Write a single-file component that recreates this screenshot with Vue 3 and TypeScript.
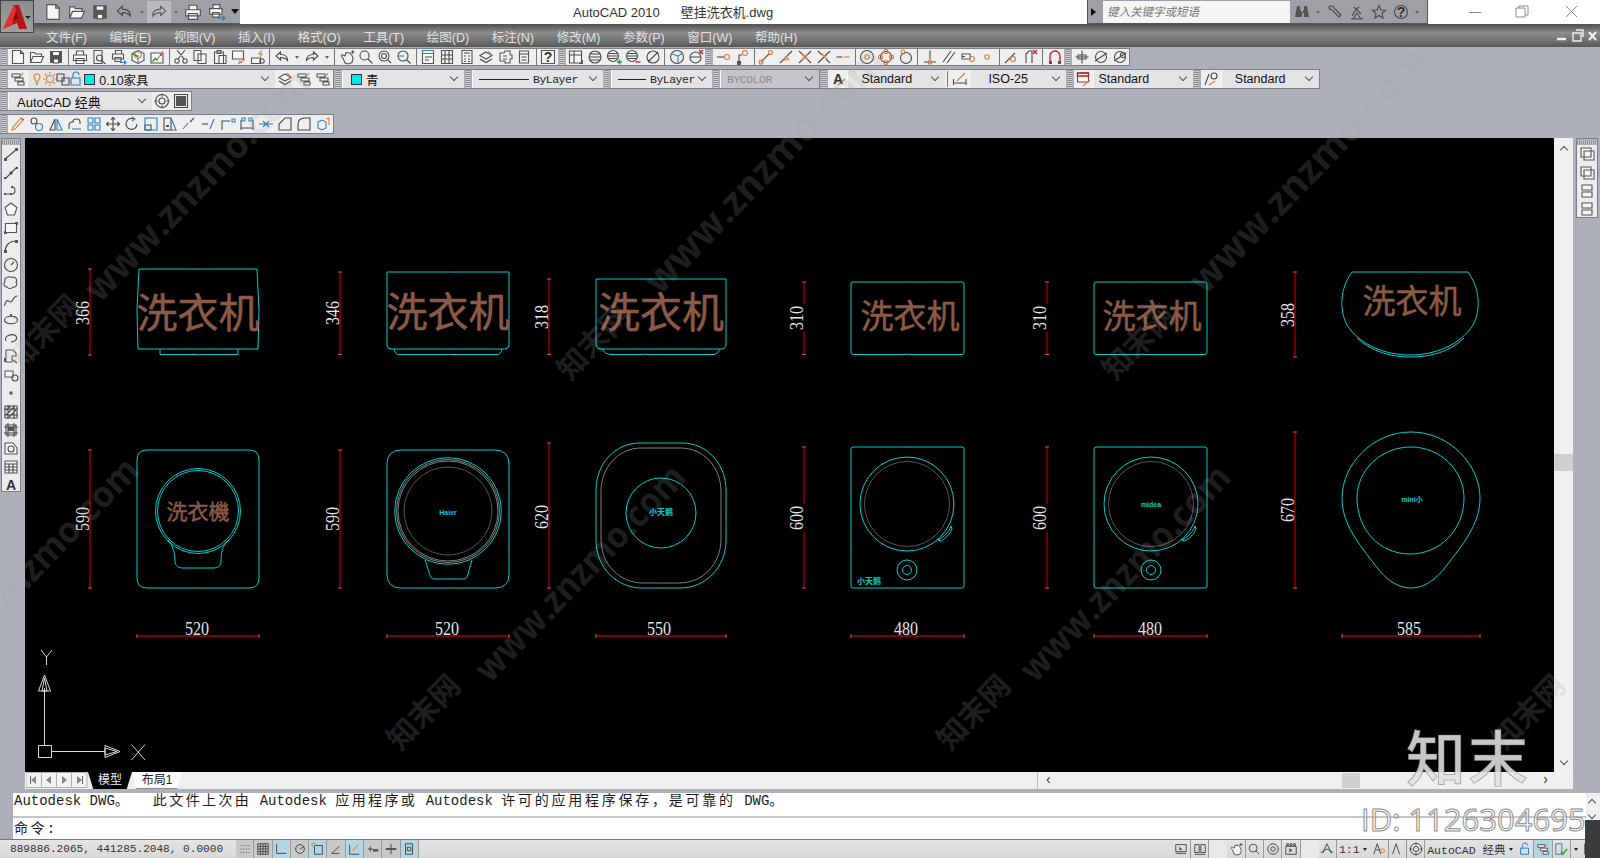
<script setup lang="ts">
import { h } from 'vue'

type Parts = { w?: string; s?: string; k?: string; b?: string; o?: string; r?: string; g?: string; t?: string }

// small toolbar glyphs, 16x16
const circle = (x: number, y: number, r: number) => `M${x - r} ${y}a${r} ${r} 0 1 0 ${2 * r} 0a${r} ${r} 0 1 0 ${-2 * r} 0z`

const icons: Record<string, Parts> = {
  new: { w: 'M2.5 1.5h8l3 3v10h-11z', k: 'M10.5 1.5v3h3' },
  open: { w: 'M1.5 13.5v-10h4l1 1.5h6v2M1.5 13.5l2.5-6h10.5l-2.5 6z' },
  save: { s: 'M2 2h12v12H2z', w: 'M4.5 2.5h7v4h-7zM5.5 10h5v4h-5z' },
  print: { w: 'M4.5 6V2h7v4M1.5 6h13v5.5h-13zM4 9.5h8v5H4z' },
  preview: { w: 'M3 1.5h8v13H3z', k: circle(8.5, 9, 3) + 'M10.5 11.5l4 3.5' },
  plot: { w: 'M4.5 5V1.5h6V5M1.5 5h11v5h-11zM4 8.5h6v4H4z', b: 'M9 13.5h6M13 11.5l2 2-2 2' },
  pub: { w: 'M8 1.5l6 3v7l-6 3-6-3v-7z', o: circle(8, 6, 3.4), b: 'M8 6v8.5', g: 'M2 4.5l6 3' },
  mark: { w: 'M2 4h12v10H2z', g: 'M3.5 12.5l3-3 2 2', o: 'M8 11l6-9', r: 'M11 6h2' },
  cut: { k: 'M4 1l7 9M12 1L5 10' + circle(4, 12, 2.2) + circle(12, 12, 2.2) },
  copy: { w: 'M2 1.5h7v10H2zM6 5h8v9.5H6z' },
  paste: { w: 'M2.5 3h9v11.500h-9zM5 1.500h4v3H5zM7 6.500h7v8H7z' },
  match: { w: 'M1.500 2h11v8h-11z', s: 'M1.500 2h11v2.500h-11z', o: 'M7 15l7-5M8 12l3 2' },
  block: { w: 'M1.500 9h9v5.500h-9z', k: circle(12, 12, 2.200), o: 'M12 1L9 5h3l-2 3' },
  undo: { k: 'M6.500 3L2 7l4.500 4V8.500c3 0 5 .5 7 3 0-4-3-6-7-6z' },
  redo: { k: 'M9.500 3L14 7l-4.500 4V8.500c-3 0-5 .5-7 3 0-4 3-6 7-6z' },
  pan: { w: 'M4 9C2 7.500 2 5.500 4 6l2 1 1-3.500 4 .5 2 2.500 1 3-1 4-4 1.500-3-1z', k: 'M12 3h3.500M13.700 1.200v3.500' },
  zoom: { k: circle(6.500, 6.500, 4.500) + 'M10 10l4.500 4.500M10.500 10.500l4 4' },
  zwin: { k: circle(7, 7, 5) + circle(7, 7, 2.500) + 'M11 11l3 3' },
  zprev: { k: circle(7, 7, 5) + 'M11 11l3.500 3.500', b: 'M3 7h5' },
  prop: { w: 'M2.500 1.500h11v13h-11z', b: 'M2.500 1.500h11v3h-11z', k: 'M5 8h7M5 11h4' },
  grid: { w: 'M2.500 1.500h11v13h-11z', k: 'M6 1.500v13M10 1.500v13M2.500 6h11M2.500 10h11' },
  calc: { w: 'M3 1.500h10v13H3z', k: 'M5 4h6M5 7h2M9 7h2M5 10h2M9 10h2M5 12.500h2M9 12.500h2' },
  layer: { w: 'M8 3l6 3.500-6 3.500-6-3.500z', k: 'M2 10l6 3.500 6-3.500', o: 'M10 2l4 4' },
  cloud: { w: 'M3 4h4l1-2h5v4h2v4h-2v4H8v-2H3z', k: 'M6 7h4M6 10h4' },
  doc: { w: 'M3.500 2h9v12h-9z', k: 'M3.500 5h9M5.500 8h5M5.500 11h5' },
  help: { w: 'M1.500 1.500h13v13h-13z', t: '?' },
  vport: { w: 'M1.500 2h12v12h-12z', k: 'M1.500 6h12M6 2v12', s: 'M11 11h4v4h-4z' },
  orb: { k: circle(8, 8, 6) + 'M2 8h12M3 5h10M3 11h10' },
  orbp: { k: circle(7, 7, 5.500) + 'M1.500 7h11M2.500 4.500h9M2.500 9.500h9', g: 'M11 13h5M13.500 10.500v5' },
  orbm: { k: circle(7, 7, 5.500) + 'M1.500 7h11M2.500 4.500h9M2.500 9.500h9', r: 'M10.500 13h5' },
  orbx: { k: circle(8, 8, 6) + 'M3 13L13 3' },
  cube: { k: circle(8, 8, 6.500), b: 'M3 5l6 2 5-3M9 7v7' },
  cubex: { k: circle(7.500, 8.500, 5.500) + 'M2 8h11', r: 'M11 1l4 4M15 1l-4 4' },
  tline: { k: 'M2 8h8', o: circle(12, 8, 2.500) },
  tfrom: { k: 'M5 14V6h3', o: circle(11, 4, 2.500), s: 'M3 12h4v4H3z' },
  oend: { k: 'M3 13L11 5', o: circle(3, 13, 2) + circle(12.500, 3.500, 2) },
  omid: { k: 'M2 14L14 2', o: 'M5.500 11l5-.500-2-3z' },
  oint: { k: 'M2 2l12 12M14 2L2 14', o: 'M5 5l6 6M11 5l-6 6' },
  oapp: { k: 'M2 2l4 4M10 10l4 4M14 2L2 14', o: 'M6 5l5 5' },
  oext: { k: 'M1.500 8h6', o: 'M9 8h5.500' },
  ocen: { k: circle(8, 8, 6.500), o: circle(8, 8, 2.200) },
  oqua: { k: circle(8, 8, 5.500), o: circle(8, 2.500, 2) + circle(8, 13.500, 2) + circle(2.500, 8, 2) + circle(13.500, 8, 2) },
  otan: { k: circle(8, 9, 5.500), o: circle(5, 3, 2) },
  oper: { k: 'M8 1.500v9M2 13h12', o: circle(8, 13, 2) },
  opar: { k: 'M2 13L10 2M6 14l8-11' },
  oins: { w: 'M2 5h8v5H2z', k: 'M2 7.500h3', o: circle(12, 10, 2.500) },
  onod: { o: circle(8, 8, 2.200) },
  onear: { k: 'M2 14L12 4', o: circle(10, 10, 2.500) },
  onone: { k: 'M3 14V5l3-3h3v12M9 14V6', r: 'M10 1l4 4M14 1l-4 4' },
  osnap: { r: 'M3 13V7a5 5 0 0 1 10 0v6', s: 'M2 12h3v3H2zM11 12h3v3h-3z' },
  orbit3: { k: 'M8 1.500v13M1.500 8h13M4 6h8v4H4z' },
  orbit2: { k: circle(8, 8, 5.500) + 'M2 12L14 4' },
  orbit1: { k: circle(8, 8, 5.500) + 'M2 12L14 4' + circle(11, 6, 2.500) },
  bulb: { o: 'M5 6a3 3 0 1 1 6 0c0 2-2 2.500-2 5H7c0-2.500-2-3-2-5z', k: 'M7 13h2' },
  sun: { o: circle(8, 8, 3.500) + 'M8 1v2M8 13v2M1 8h2M13 8h2M3 3l1.500 1.500M13 3l-1.500 1.500M3 13l1.500-1.500M13 13l-1.500-1.500' },
  frz: { k: 'M2 3h7v7H2zM7 7h7v7H7z' },
  lock: { b: 'M3 7h9v7H3zM5 7V4a3 3 0 0 1 6 0' },
  gear: { k: circle(8, 8, 3) + circle(8, 8, 6.500) + 'M8 .5v3M8 12.500v3M.5 8h3M12.500 8h3' },
  dots: { s: 'M3 3h10v10H3z', k: 'M1.500 1.500h13v13h-13z' },
  ltool: { w: 'M2 3h8v3H2zM5 7h8v3H5zM8 11h6v3H8z', o: 'M13 2l-2 3' },
  textst: { t: 'A', o: 'M8 14l7-6' },
  dimst: { k: 'M1.500 14V8M1.500 12h12M14 14V8', o: 'M5 10l8-8' },
  tblst: { w: 'M1.500 2h11v9h-11z', r: 'M1.500 2h11v3h-11z', o: 'M7 15l7-6' },
  mlst: { k: 'M2 14L6 3' + circle(11, 5, 3), o: 'M6 14l6-4' },
  erase: { o: 'M2 14l3-1 8-9-2-2-8 9z', k: 'M11 2l3 2' },
  ccopy: { k: circle(5, 5, 3), b: circle(10, 11, 3.500) },
  mirror: { k: 'M2 14L7 3v11z', b: 'M9 3v11h5z' },
  offset: { k: 'M2 13V9a3 3 0 0 1 3-3h1a3 3 0 0 1 3-3h1a3 3 0 0 1 3 3v2', b: 'M5 13h9' },
  array: { b: 'M2 2h5v5H2zM9 2h5v5H9zM2 9h5v5H2zM9 9h5v5H9z' },
  move: { k: 'M8 1.500v13M1.500 8h13M6 3.500l2-2 2 2M6 12.500l2 2 2-2M3.500 6l-2 2 2 2M12.500 6l2 2-2 2' },
  rotate: { k: 'M13 8a5.500 5.500 0 1 1-3-5', b: 'M8 1l3 2-3 2' },
  scale: { b: 'M2 2h12v12H2z', k: 'M2 9h6v5H2z' },
  stretch: { k: 'M2 2h7v12H2z', b: 'M9 2l5 12H9', s: 'M4 9h3v2H4z' },
  trim: { b: 'M2 13L7 7', k: 'M9 6l4-4' },
  extend: { k: 'M2 8h6', b: 'M10 13l4-10' },
  brk1: { k: 'M2 14V5h8', b: 'M12 3h3v3h-3z' },
  brk2: { k: 'M2 14V4M14 14V4M2 12h12', b: 'M3 2h3v3H3zM10 2h3v3h-3z' },
  join: { b: 'M1 8h14M5 5l3 3-3 3M11 5l-3 3 3 3' },
  chamfer: { k: 'M14 2H8L2 8v6h12z' },
  fillet: { k: 'M14 2H8a6 6 0 0 0-6 6v6h12z' },
  explode: { b: 'M3 6l4-2 4 2v6l-4 2-4-2z', o: 'M11 3l3-1v7' },
  lline: { k: 'M2 13L14 3', s: 'M1 12h3v3H1zM12 2h3v3h-3z' },
  xline: { k: 'M2 14L14 2', s: 'M6.500 6.500h3v3h-3zM1 12h2v2H1zM13 2h2v2h-2z' },
  pline: { k: 'M2 11h6M9 4c4 0 4 7 0 7', s: 'M1 10h2v2H1zM7 10h2v2H7zM8 3h2v2H8z' },
  poly: { w: 'M8 2l6 4.500-2.500 7.500h-7L2 6.500z' },
  rect: { w: 'M2.500 3.500h11v9h-11z', s: 'M1 11h3v3H1zM12 2h3v3h-3z' },
  arc: { k: 'M2 14C2 8 6 3 13 3', s: 'M1 12h3v3H1zM12 2h3v3h-3z' },
  circ: { k: circle(8, 8, 6.500) + 'M8 8l3-3' },
  rev: { k: 'M5 2c2-1 3 1 5 0 4 0 4 4 3 5 2 3-1 6-3 5-1 2-5 2-6 0-3 0-4-4-2-5-1-3 1-5 3-5z' },
  spl: { k: 'M1.500 13C4 2 7 12 9 8s3-5 5.500-5' },
  ell: { k: 'M1.500 8c0-5 13-5 13 0s-13 5-13 0z', s: 'M7 2h2v2H7z' },
  earc: { k: 'M3 11C0 6 9 3 13 6c2 3-1 6-5 6' },
  ins: { w: 'M3 2h7l3 3v3H9v6H3z', s: 'M1 10h4v4H1z', k: 'M10 12l4 3' },
  mkb: { w: 'M2 4h8v6H2z', k: circle(12, 11, 3) },
  point: { s: 'M6.500 6.500h3v3h-3z' },
  hatch: { k: 'M2 2h12v12H2zM1 5h14M1 11h14M5 1v14M11 1v14M3 6l5-4M6 13l7-7M3 11l8-8' },
  grad: { k: 'M3 3h10v10H3zM1 5h14M1 11h14M5 1v14M11 1v14', s: 'M5 5h6v4H5z' },
  region: { w: 'M2 3h8l4 5v6H2z', k: circle(8, 9, 3) },
  table: { w: 'M2 2h12v12H2z', k: 'M2 5h12M2 8h12M2 11h12M6 5v9M10 5v9' },
  mtext: { t: 'A' },
  rdraw: { w: 'M2 2h10v9H2zM5 5h10v9H5z' },
  rsnap: { w: 'M3 2h10v5H3zM3 9h10v5H3z' },
  bino: { s: 'M3 2h3v4h1v2h2V6h1V2h3l2 11h-5V9H8v4H1z' },
  wrench: { k: 'M2 3a3 3 0 0 1 5 1l7 7-2 2-7-7a3 3 0 0 1-3-3z' },
  sat: { k: 'M5 3l7 7M3 12c2-4 4-7 7-9M2 15h12M8 9l4 6M8 9l-4 6' },
  star: { k: 'M8 1.500l2 4.500 4.500.5-3.500 3 1 4.500L8 11.500l-4 2.500 1-4.500-3.500-3 4.500-.5z' },
  qhelp: { k: circle(8, 8, 6.500), t: '?' },
  mdl: { k: 'M2 13h12M2 3h12v8H2z', s: 'M6 5l4 4H6z' },
  lay: { k: 'M2 3h5v9H2zM9 3h5v9H9zM2 14h12' },
  zoomst: { k: circle(7, 7, 4.500) + 'M10 10l4 4' },
  wheel: { k: circle(8, 8, 6) + circle(8, 8, 2.500) },
  vid: { k: 'M2 5h12v9H2zM3 2h2v2H3zM7 2h2v2H7zM11 2h2v2h-2z', s: 'M6 7l4 2.500L6 12z' },
  anno: { k: 'M8 2L3 13M8 2l5 11M1 12l7-4 7 4' },
  annoa: { k: 'M6 2L2 14M6 2l4 12M4 9h5', o: circle(12, 10, 2.200) },
  annob: { k: 'M7 2L3 14M7 2l4 12' },
  statcheck: { b: 'M2 2h7v12H2z', g: 'M8 11l2 3 5-6' },
  sgrid: { k: 'M2 2h12v12H2zM5 2v12M8 2v12M11 2v12M2 5h12M2 8h12M2 11h12' },
  ssnap: { k: 'M3 4h1M6 4h1M9 4h1M12 4h1M3 8h1M6 8h1M9 8h1M12 8h1M3 12h1M6 12h1M9 12h1M12 12h1' },
  sortho: { k: 'M3 2v11h11' },
  spolar: { k: circle(8, 8, 5) + 'M8 8l5-3' },
  sosnap: { k: 'M4 4h9v10H4z', o: circle(3, 3, 2) },
  s3d: { k: 'M3 13l9-8M3 13h9' },
  sducs: { k: 'M3 14V3M3 14h11', o: 'M6 10l7-7' },
  sdyn: { k: 'M2 8h6M5 5v6', s: 'M8 8h6v3H8z' },
  slw: { k: 'M8 2v12M2 8h12', s: 'M2 7h12v2H2z' },
  sqp: { k: 'M4 2h8v12H4zM6 6h4v4H6z' },
  square: { k: 'M2 2h12v12H2z' }
}

const Ico = (props: { n: string }) => {
  const p = icons[props.n] || {}
  const kids = []
  if (p.s) kids.push(h('path', { d: p.s, fill: '#555' }))
  if (p.w) kids.push(h('path', { d: p.w, fill: '#f6f6f6', stroke: '#555', 'stroke-width': 1.1 }))
  if (p.k) kids.push(h('path', { d: p.k, stroke: '#4a4a4a', 'stroke-width': 1.1 }))
  if (p.b) kids.push(h('path', { d: p.b, stroke: '#2b7fc4', 'stroke-width': 1.1 }))
  if (p.o) kids.push(h('path', { d: p.o, stroke: '#dd7a3a', 'stroke-width': 1.1 }))
  if (p.r) kids.push(h('path', { d: p.r, stroke: '#c81e1e', 'stroke-width': 1.3 }))
  if (p.g) kids.push(h('path', { d: p.g, stroke: '#2aa02a', 'stroke-width': 1.6 }))
  if (p.t) kids.push(h('text', { x: 8, y: 13, 'text-anchor': 'middle', 'font-size': 14, 'font-family': 'Liberation Sans, sans-serif', 'font-weight': 700, fill: '#333' }, p.t))
  return h('svg', { class: 'ico', viewBox: '0 0 16 16', width: 16, height: 16, fill: 'none' }, kids)
}
Ico.props = ['n']

const split = (s: string) => s.split(' ')

const qat = split('new open save undo v redo v print plot')
const row1 = split('# new open save | print preview plot pub mark | cut copy paste match block | undo v redo v | pan zoom zwin zprev | prop grid calc layer cloud doc | help # vport orb orbp orbm orbx | cube cubex # tline tfrom | oend omid oint oapp oext | ocen oqua otan | oper opar oins onod | onear onone | osnap # orbit3 orbit2 orbit1')
const row4 = split('erase ccopy mirror offset array move rotate scale stretch trim extend brk1 brk2 join chamfer fillet explode')
const rail = split('lline xline pline poly rect arc circ rev spl ell earc ins mkb point hatch grad region table mtext')
const rightRail = split('rdraw rdraw rsnap rsnap')
const menus = ['文件(F)', '编辑(E)', '视图(V)', '插入(I)', '格式(O)', '工具(T)', '绘图(D)', '标注(N)', '修改(M)', '参数(P)', '窗口(W)', '帮助(H)']
const leftStatus = [
  { n: 'ssnap' }, { n: 'sgrid' }, { n: 'sortho', on: true }, { n: 'spolar' }, { n: 'sosnap', on: true },
  { n: 's3d' }, { n: 'sducs', on: true }, { n: 'sdyn' }, { n: 'slw' }, { n: 'sqp', on: true }
]

// the drawing itself, in page coordinates
const CYAN = '#00cfcf'
const shapes = [
  // 1 top
  'M139 269H257L259 310 258 349H138L137 310Z', 'M160 349V354.500H238V349',
  // 2 top
  'M387 272H509V345Q509 349 505 349H391Q387 349 387 345Z', 'M394 349Q395 354.500 399 354.500H497Q501 354.500 502 349',
  // 3 top
  'M596 279H726V344Q726 349 721 349H601Q596 349 596 344Z', 'M602 349Q605 354.500 610 354.500H714Q718 354.500 720 349',
  // 4, 5 top
  'M853 282H962Q964 282 964 284V352Q964 354.500 962 354.500H853Q851 354.500 851 352V284Q851 282 853 282Z',
  'M1096 282H1205Q1207 282 1207 284V352Q1207 354.500 1205 354.500H1096Q1094 354.500 1094 352V284Q1094 282 1096 282Z',
  // 6 top
  'M1352 272H1468C1480 288 1481 310 1473 325C1460 345 1435 355 1410 355C1385 355 1360 345 1347 325C1339 310 1340 288 1352 272Z',
  'M1357 338C1372 352 1392 357 1410 357C1430 357 1450 352 1464 338',
  // 1 bottom
  'M147 450H249Q259 450 259 460V578Q259 588 249 588H147Q137 588 137 578V460Q137 450 147 450Z',
  'M168 540C173 546 175 553 175 561C175 566 179 568 183 568H213C218 568 221 566 221 561C221 553 222 548 227 541',
  // 2 bottom
  'M401 450H495Q509 450 509 464V574Q509 588 495 588H401Q387 588 387 574V464Q387 450 401 450Z',
  'M425 560C428 568 429 574 431 577C432 579 433 579 436 579H462C465 579 466 579 467 577C469 572 470 566 472 560',
  // 3 bottom
  'M640 443H682C708 443 726 465 726 490V540C726 568 705 588 680 588H642C617 588 596 568 596 540V490C596 465 614 443 640 443Z',
  // 4/5 bottom boxes
  'M853 447H962Q964 447 964 449V586Q964 588 962 588H853Q851 588 851 586V449Q851 447 853 447Z',
  'M1096 447H1205Q1207 447 1207 449V586Q1207 588 1205 588H1096Q1094 588 1094 586V449Q1094 447 1096 447Z',
  'M938 540C944 537 949 532 951 526L952 529C950 534 945 539 941 541Z',
  'M1182 540C1188 537 1193 532 1195 526L1196 529C1194 534 1189 539 1185 541Z',
  // 6 bottom
  'M1411 432C1450 432 1480 465 1480 498C1480 525 1462 545 1447 565C1436 580 1424 588 1411 588C1398 588 1386 580 1375 565C1360 545 1342 525 1342 498C1342 465 1372 432 1411 432Z',
  'M1411 447C1440 447 1464 470 1464 498C1464 530 1440 554 1410 554C1380 554 1357 530 1357 498C1357 470 1381 447 1411 447Z'
]
const circles = [
  { x: 198, y: 511, r: 42.500, c: CYAN }, { x: 198, y: 511, r: 40.500, c: CYAN },
  { x: 448, y: 511, r: 53.300, c: CYAN }, { x: 448, y: 511, r: 51.500, c: '#808080' }, { x: 448, y: 511, r: 50, c: '#808080' }, { x: 448, y: 511, r: 44, c: '#555' },
  { x: 661, y: 513, r: 35, c: CYAN },
  { x: 907, y: 504, r: 47, c: CYAN }, { x: 907, y: 504, r: 42.500, c: '#555' }, { x: 907, y: 570, r: 10, c: CYAN }, { x: 907, y: 570, r: 4.500, c: CYAN },
  { x: 1151, y: 504, r: 47, c: CYAN }, { x: 1151, y: 504, r: 42.500, c: '#555' }, { x: 1151, y: 570, r: 10, c: CYAN }, { x: 1151, y: 570, r: 4.500, c: CYAN }
]
const innerSquare = 'M641 448H681C704 448 721 468 721 491V539C721 565 702 583 679 583H643C620 583 601 565 601 539V491C601 468 618 448 641 448Z'

const vDims = [
  { x: 90, y1: 269, y2: 355, t: '366', ty: 313 },
  { x: 340, y1: 272, y2: 354.500, t: '346', ty: 313 },
  { x: 549, y1: 279, y2: 354.500, t: '318', ty: 317 },
  { x: 804, y1: 282, y2: 354.500, t: '310', ty: 318, gap: true },
  { x: 1047, y1: 282, y2: 354.500, t: '310', ty: 318, gap: true },
  { x: 1295, y1: 272, y2: 357, t: '358', ty: 315 },
  { x: 90, y1: 450, y2: 588, t: '590', ty: 519 },
  { x: 340, y1: 450, y2: 588, t: '590', ty: 519 },
  { x: 549, y1: 443, y2: 588, t: '620', ty: 517 },
  { x: 804, y1: 447, y2: 588, t: '600', ty: 518, gap: true },
  { x: 1047, y1: 447, y2: 588, t: '600', ty: 518, gap: true },
  { x: 1295, y1: 432, y2: 588, t: '670', ty: 510 }
]
const hDims = [
  { x1: 137, x2: 259, t: '520', tx: 197 },
  { x1: 387, x2: 509, t: '520', tx: 447 },
  { x1: 596, x2: 726, t: '550', tx: 659 },
  { x1: 851, x2: 964, t: '480', tx: 906 },
  { x1: 1094, x2: 1207, t: '480', tx: 1150 },
  { x1: 1342, x2: 1480, t: '585', tx: 1409 }
]
const labels = [
  { x: 198, y: 310, s: 41, t: '洗衣机' }, { x: 448, y: 309, s: 41, t: '洗衣机' }, { x: 661, y: 309, s: 42, t: '洗衣机' },
  { x: 910, y: 314, s: 33, t: '洗衣机' }, { x: 1152, y: 314, s: 33, t: '洗衣机' }, { x: 1412, y: 299, s: 33, t: '洗衣机' },
  { x: 198, y: 510, s: 21, t: '洗衣機' }
]
const logos = [
  { x: 448, y: 512, s: 7, t: 'Haier' }, { x: 661, y: 512, s: 8, t: '小天鹅' }, { x: 869, y: 581, s: 8, t: '小天鹅' },
  { x: 1151, y: 504, s: 7, t: 'midea' }, { x: 1412, y: 499, s: 7, t: 'mini小' }
]
const ticks = [
  [198, 269], [198, 355], [448, 272], [448, 354], [645, 279], [645, 354], [907, 282], [907, 354], [1143, 282], [1143, 354], [1410, 272], [1410, 357],
  [198, 588], [137, 561], [259, 553], [448, 450], [448, 588], [387, 550], [509, 550], [661, 443], [661, 588], [596, 516], [726, 516],
  [907, 447], [907, 588], [851, 547], [964, 547], [1138, 447], [1138, 588], [1094, 536], [1207, 536], [1411, 432], [1411, 588]
]

// site watermark, running along the diagonals
const marks = [
  { x: 20, y: 372, s: 30, t: '知末网' }, { x: 100, y: 304, s: 37, t: 'www.znzmo.com', l: 305 },
  { x: 570, y: 382, s: 30, t: '知末网' }, { x: 660, y: 296, s: 38, t: 'www.znzmo.com', l: 325 },
  { x: 1115, y: 382, s: 30, t: '知末网' }, { x: 1205, y: 296, s: 38, t: 'www.znzmo.com', l: 325 },
  { x: 6, y: 612, s: 36, t: 'znzmo.com', l: 195 },
  { x: 400, y: 752, s: 30, t: '知末网' }, { x: 490, y: 684, s: 36, t: 'www.znzmo.com', l: 285 },
  { x: 950, y: 752, s: 30, t: '知末网' }, { x: 1035, y: 684, s: 36, t: 'www.znzmo.com', l: 285 },
  { x: 1505, y: 752, s: 30, t: '知末网' }
]
</script>

<template>
  <div class="app">
    <header class="title">
      <div class="qat">
        <div class="logo">
          <svg width="30" height="30" viewBox="0 0 30 30">
            <path d="M13 3L2 27l9-4 5-2 2 6h8L18 3z" fill="#b81414" />
            <path d="M13 3L2 27l9-4 4-14z" fill="#e23030" />
            <path d="M15 9l-3 9 5-1z" fill="#7a0c0c" />
          </svg>
          <span class="logo-dd"></span>
        </div>
        <template v-for="(n, i) in qat" :key="i">
          <span v-if="n === 'v'" class="dd"></span>
          <span v-else class="slot" :class="{ faded: i === 5 }"><Ico :n="n" /></span>
        </template>
        <span class="qat-more"></span>
      </div>
      <div class="caption"><span>AutoCAD 2010</span><span>壁挂洗衣机.dwg</span></div>
      <div class="search">
        <span class="tri"></span>
        <div class="search-box">键入关键字或短语</div>
        <span class="slot"><Ico n="bino" /></span><span class="dd"></span>
        <span class="slot"><Ico n="wrench" /></span>
        <span class="slot"><Ico n="sat" /></span>
        <span class="slot"><Ico n="star" /></span>
        <span class="slot"><Ico n="qhelp" /></span><span class="dd"></span>
      </div>
      <div class="winctl">
        <svg width="130" height="16" viewBox="0 0 130 16" fill="none" stroke="#8a8a8a">
          <path d="M0 8.500H12M47 4h9v9h-9zM50 4V2h9v9h-3M97 2l11 11M108 2L97 13" />
        </svg>
      </div>
    </header>

    <nav class="menu">
      <span v-for="m in menus" :key="m" class="menu-item">{{ m }}</span>
      <div class="doc-ctl">
        <svg width="42" height="14" viewBox="0 0 42 14">
          <path d="M1 10h9" stroke="#eee" stroke-width="2.500" />
          <path d="M17 4h8v8h-8zM20 1h7v7" stroke="#eee" stroke-width="1.400" fill="none" />
          <path d="M33 3l7 8M40 3l-7 8" stroke="#eee" stroke-width="2.200" />
        </svg>
      </div>
    </nav>

    <section class="tools">
      <div class="tool-row r1">
        <div class="panel p1">
          <template v-for="(n, i) in row1" :key="i">
            <span v-if="n === '#'" class="grip"></span>
            <span v-else-if="n === '|'" class="sep"></span>
            <span v-else-if="n === 'v'" class="dd"></span>
            <span v-else class="slot"><Ico :n="n" /></span>
          </template>
        </div>
      </div>

      <div class="tool-row r2">
        <div class="panel">
          <span class="grip"></span>
          <span class="slot"><Ico n="ltool" /></span>
          <div class="combo c-layer">
            <span class="mini"><Ico n="bulb" /></span>
            <span class="mini"><Ico n="sun" /></span>
            <span class="mini"><Ico n="frz" /></span>
            <span class="mini"><Ico n="lock" /></span>
            <span class="swatch"></span>
            <span class="combo-text">0.10家具</span>
            <span class="chev"></span>
          </div>
          <span class="slot"><Ico n="layer" /></span>
          <span class="slot"><Ico n="ltool" /></span>
          <span class="slot"><Ico n="ltool" /></span>
        </div>
        <div class="panel">
          <span class="grip"></span>
          <div class="combo c-color"><span class="swatch"></span><span class="combo-text">青</span><span class="chev"></span></div>
          <span class="grip"></span>
          <div class="combo c-lt"><span class="rule"></span><span class="serif">ByLayer</span><span class="chev"></span></div>
          <span class="grip"></span>
          <div class="combo c-lw"><span class="rule short"></span><span class="serif">ByLayer</span><span class="chev"></span></div>
          <span class="grip"></span>
          <div class="combo c-plot"><span class="serif off">BYCOLOR</span><span class="chev"></span></div>
        </div>
        <div class="panel">
          <span class="grip"></span>
          <span class="slot"><Ico n="textst" /></span>
          <div class="combo c-text"><span class="combo-text mid">Standard</span><span class="chev"></span></div>
          <span class="sep"></span>
          <span class="slot"><Ico n="dimst" /></span>
          <div class="combo c-dim"><span class="combo-text mid">ISO-25</span><span class="chev"></span></div>
          <span class="grip"></span>
          <span class="slot"><Ico n="tblst" /></span>
          <div class="combo c-tbl"><span class="combo-text">Standard</span><span class="chev"></span></div>
          <span class="grip"></span>
          <span class="slot"><Ico n="mlst" /></span>
          <div class="combo c-ml"><span class="combo-text mid">Standard</span><span class="chev"></span></div>
        </div>
      </div>

      <div class="tool-row r3">
        <div class="panel">
          <span class="grip"></span>
          <div class="combo c-ws"><span class="combo-text">AutoCAD 经典</span><span class="chev"></span></div>
          <span class="slot"><Ico n="gear" /></span>
          <span class="slot"><Ico n="dots" /></span>
        </div>
      </div>

      <div class="tool-row r4">
        <div class="panel">
          <span class="grip"></span>
          <span v-for="n in row4" :key="n" class="slot"><Ico :n="n" /></span>
        </div>
      </div>
    </section>

    <main class="work">
      <aside class="rail">
        <div class="vbar">
          <span class="vgrip"></span>
          <span v-for="n in rail" :key="n" class="vslot"><Ico :n="n" /></span>
        </div>
      </aside>

      <div class="center">
        <div class="canvas-row">
          <svg class="canvas" width="1529" height="634" viewBox="25 138 1529 634" fill="none">
            <path v-for="(d, i) in shapes" :key="i" :d="d" :stroke="CYAN" />
            <circle v-for="(c, i) in circles" :key="'c' + i" :cx="c.x" :cy="c.y" :r="c.r" :stroke="c.c" />
            <path :d="innerSquare" stroke="#808080" />

            <g v-for="(d, i) in vDims" :key="'v' + i">
              <template v-if="d.gap">
                <path :d="`M${d.x} ${d.y1}V${d.ty - 14}M${d.x} ${d.ty + 14}V${d.y2}`" stroke="#e00000" />
              </template>
              <path v-else :d="`M${d.x} ${d.y1}V${d.y2}`" stroke="#e00000" />
              <path :d="`M${d.x - 2} ${d.y1}h4M${d.x - 2} ${d.y2}h4`" stroke="#e05050" />
              <text :transform="`translate(${d.x - 1} ${d.ty}) rotate(-90)`" class="dim" text-anchor="middle" textLength="24" lengthAdjust="spacingAndGlyphs">{{ d.t }}</text>
            </g>
            <g v-for="(d, i) in hDims" :key="'h' + i">
              <path :d="`M${d.x1} 636H${d.x2}`" stroke="#a80000" stroke-width="1.600" />
              <path :d="`M${d.x1} 634v4M${d.x2} 634v4`" stroke="#e05050" />
              <text :x="d.tx" y="635" class="dim" text-anchor="middle" textLength="24" lengthAdjust="spacingAndGlyphs">{{ d.t }}</text>
            </g>

            <text v-for="(l, i) in labels" :key="'l' + i" :x="l.x" :y="l.y" :font-size="l.s" class="label" text-anchor="middle" dominant-baseline="central">{{ l.t }}</text>
            <text v-for="(l, i) in logos" :key="'b' + i" :x="l.x" :y="l.y" :font-size="l.s" class="brand" text-anchor="middle" dominant-baseline="central">{{ l.t }}</text>
            <path v-for="(t, i) in ticks" :key="'t' + i" :d="`M${t[0] - 1} ${t[1]}h2`" stroke="#e02020" />

            <g class="ucs" stroke="#d8d8d8">
              <path d="M38.500 745.500h13v12h-13zM44.500 745.500V688M51.500 751.500H105" />
              <path d="M38.500 691L44.500 675L50.500 691ZM42 691L44.500 678L47 691ZM105 745.500L120 751.500L105 757.500ZM105 748L117 751.500L105 755Z" />
              <path d="M41 650L46.500 657L52 650M46.500 657V665M131.500 744.500L145 760M145 744.500L131.500 760" />
            </g>
          </svg>
          <div class="vscroll">
            <span class="chev up"></span>
            <span class="vthumb"></span>
            <span class="chev"></span>
          </div>
        </div>
        <div class="tabs">
          <div class="nav">
            <svg width="62" height="16" viewBox="0 0 62 16">
              <path d="M0 .5h61v15H0zM15.500 0v16M30.500 0v16M45.500 0v16" fill="#f2f2f2" stroke="#b0b0b0" />
              <path d="M10 4v8L5 8zM25 4v8l-5-4zM36 4v8l5-4zM51 4v8l5-4z" fill="#888" />
              <path d="M4.500 4v8M56.500 4v8" stroke="#666" />
            </svg>
          </div>
          <div class="tab active">模型</div>
          <div class="tab">布局1</div>
          <div class="tabs-rest"></div>
          <div class="hscroll">
            <span class="arrow">‹</span>
            <span class="hthumb"></span>
            <span class="arrow">›</span>
          </div>
        </div>
      </div>

      <aside class="rail-right">
        <div class="vbar small">
          <span class="vgrip"></span>
          <span v-for="(n, i) in rightRail" :key="i" class="vslot"><Ico :n="n" /></span>
        </div>
      </aside>
    </main>

    <section class="command">
      <div class="cmd-grip"></div>
      <div class="cmd-body">
        <div class="cmd-line log">Autodesk DWG。<span class="cjk first">此文件上次由</span> Autodesk <span class="cjk">应用程序或</span> Autodesk <span class="cjk last">许可的应用程序保存，是可靠的</span> DWG。</div>
        <div class="cmd-line prompt"><span class="cjk">命令</span>:</div>
      </div>
      <div class="cmd-scroll"><span class="chev up"></span><span class="chev"></span></div>
    </section>

    <footer class="status">
      <span class="coords">889886.2065, 441285.2048, 0.0000</span>
      <div class="st-group">
        <span v-for="b in leftStatus" :key="b.n" class="st-btn" :class="{ on: b.on }"><Ico :n="b.n" /></span>
      </div>
      <div class="st-right">
        <span class="st-btn"><Ico n="mdl" /></span><span class="st-btn"><Ico n="lay" /></span>
        <span class="st-space"></span>
        <span class="st-btn"><Ico n="pan" /></span><span class="st-btn"><Ico n="zoomst" /></span><span class="st-btn"><Ico n="wheel" /></span><span class="st-btn"><Ico n="vid" /></span>
        <span class="st-space"></span>
        <span class="st-btn"><Ico n="anno" /></span><span class="st-text">1:1</span><span class="dd dark"></span>
        <span class="st-btn"><Ico n="annoa" /></span><span class="st-btn"><Ico n="annob" /></span>
        <span class="st-btn gear"><Ico n="gear" /></span><span class="st-text">AutoCAD 经典</span><span class="dd dark"></span>
        <span class="st-btn"><Ico n="lock" /></span><span class="st-btn on"><Ico n="ltool" /></span><span class="st-btn"><Ico n="statcheck" /></span>
        <span class="dd dark"></span><span class="st-btn"><Ico n="square" /></span>
      </div>
    </footer>

    <div class="corner"></div>
    <svg class="watermark" width="1600" height="858" viewBox="0 0 1600 858">
      <text v-for="(m, i) in marks" :key="i" :transform="`translate(${m.x} ${m.y}) rotate(-46)`" :font-size="m.s" :textLength="m.l" class="wm" :lengthAdjust="m.l ? 'spacingAndGlyphs' : undefined">{{ m.t }}</text>
      <text x="1406" y="781" class="brand-big">知末</text>
      <text x="1361" y="831" class="brand-id">ID: 1126304695</text>
    </svg>
  </div>
</template>

<style scoped>
.app {
  position: relative;
  width: 1600px;
  height: 858px;
  overflow: hidden;
  display: flex;
  flex-direction: column;
  background: #adb0b8;
  font-family: "Liberation Sans", "Noto Sans CJK SC", sans-serif;
  color: #222;
}
.ico {
  display: block;
  flex: none;
}
.slot {
  width: 19.250px;
  height: 16px;
  flex: none;
  display: flex;
  justify-content: center;
  align-items: center;
}
.sep {
  width: 4.700px;
  height: 16px;
  flex: none;
  background: linear-gradient(#777, #777) center / 1px 100% no-repeat;
}
.grip {
  width: 8px;
  align-self: stretch;
  flex: none;
  background: repeating-linear-gradient(#8c8c8c 0 1px, #d0d0d0 1px 2px) center / 4px 100% no-repeat #adb0b8;
}
.dd {
  width: 10.700px;
  flex: none;
  display: flex;
  align-items: center;
  justify-content: center;
}
.dd::before {
  content: "";
  border: 2.500px solid transparent;
  border-top: 3px solid #666;
  margin-top: 3px;
}
.dd.dark::before {
  border-top-color: #222;
}

/* title bar */
.title {
  height: 25px;
  flex: none;
  display: flex;
  background: #fff;
  border-bottom: 1px solid #555;
  box-sizing: border-box;
  position: relative;
}
.qat {
  width: 240px;
  height: 24px;
  display: flex;
  align-items: center;
  background: #9fa0a3;
  border-bottom: 1px solid #555;
  box-sizing: border-box;
  padding-left: 41px;
  position: relative;
}
.qat .slot {
  width: 23.800px;
}
.qat .faded {
  background: #c2c3c6;
  opacity: .75;
  height: 22px;
}
.qat .ico {
  width: 18px;
  height: 18px;
}
.qat-more {
  width: 0;
  height: 0;
  margin-left: 2px;
  border: 4px solid transparent;
  border-top: 5px solid #111;
  margin-top: 4px;
}
.logo {
  position: absolute;
  z-index: 2;
  left: 0;
  top: 0;
  width: 34px;
  height: 33px;
  background: linear-gradient(#8c8c8c, #a0a0a0);
  border: 1px solid #444;
  box-sizing: border-box;
  display: flex;
  align-items: center;
}
.logo-dd {
  position: absolute;
  right: 2px;
  top: 15px;
  border: 3px solid transparent;
  border-top: 3px solid #222;
}
.caption {
  position: absolute;
  left: 573px;
  top: 3px;
  display: flex;
  align-items: baseline;
  gap: 21px;
  font-size: 13px;
  line-height: 20px;
  color: #333;
}
.search {
  position: absolute;
  left: 1087px;
  top: 0;
  width: 341px;
  height: 24px;
  background: #9fa0a3;
  border: 1px solid #555;
  border-top: 0;
  box-sizing: border-box;
  display: flex;
  align-items: center;
}
.search .slot {
  width: 22px;
}
.tri {
  border: 4px solid transparent;
  border-left: 5px solid #111;
  margin-left: 3px;
}
.search-box {
  width: 187px;
  height: 22px;
  margin: 0 1px 0 3px;
  background: #f5f5f5;
  font-size: 11.500px;
  font-style: italic;
  line-height: 22px;
  padding-left: 4px;
  box-sizing: border-box;
  color: #777;
}
.winctl {
  position: absolute;
  left: 1469px;
  top: 4px;
}

/* menu */
.menu {
  height: 22px;
  flex: none;
  display: flex;
  align-items: center;
  gap: 22.600px;
  padding-left: 46px;
  background: linear-gradient(#565656, #8c8c8c 35%, #6e6e6e 75%, #555);
  position: relative;
}
.menu-item {
  color: #e0e0e0;
  font-size: 12.500px;
  white-space: nowrap;
}
.doc-ctl {
  position: absolute;
  right: 2px;
  top: 4px;
}

/* docked toolbars */
.tools {
  height: 91px;
  flex: none;
  display: flex;
  flex-direction: column;
  box-sizing: border-box;
  padding-top: 1px;
}
.tool-row {
  display: flex;
}
.r1 {
  height: 18px;
  margin-bottom: 3px;
}
.r2 {
  height: 20px;
  margin-bottom: 2px;
}
.r3 {
  height: 20px;
  margin-bottom: 3px;
}
.r4 {
  height: 20px;
}
.r4 .slot {
  width: 19.100px;
}
.panel {
  display: flex;
  align-items: center;
  background: #efefef;
  border: 1px solid #7d7f85;
  border-left: 0;
  box-sizing: border-box;
  height: 100%;
  padding-left: 0;
}
.p1 {
  width: 1130px;
}
.combo {
  height: 100%;
  display: flex;
  align-items: center;
  background: #e4e4e6;
  box-sizing: border-box;
  position: relative;
  border-left: 1px solid #fafafa;
  font-size: 12.500px;
  flex: none;
}
.combo-text {
  white-space: nowrap;
  color: #111;
  padding-left: 4px;
}
.combo-text.mid {
  margin: 0 auto;
  padding-right: 24px;
}
.chev {
  position: absolute;
  right: 7px;
  top: 50%;
  width: 5px;
  height: 5px;
  margin-top: -5px;
  border-right: 1px solid #555;
  border-bottom: 1px solid #555;
  transform: rotate(45deg);
}
.chev.up {
  transform: rotate(225deg);
}
.c-layer { width: 248px; padding-left: 2px; }
.c-color { width: 122px; padding-left: 6px; }
.c-lt { width: 131px; }
.c-lw { width: 101px; }
.c-plot { width: 99px; background: #c4c5c9; padding-left: 6px; }
.c-text { width: 98px; }
.c-dim { width: 97px; }
.c-tbl { width: 100px; }
.c-ml { width: 98px; }
.c-ws { width: 144px; padding-left: 4px; font-size: 13px; }
.mini {
  width: 13px;
  display: flex;
  justify-content: center;
}
.swatch {
  width: 9px;
  height: 9px;
  background: #00e8e8;
  border: 1px solid #333;
  margin-left: 2px;
  flex: none;
}
.rule {
  width: 50px;
  height: 1px;
  background: #222;
  margin-left: 6px;
  margin-right: 4px;
}
.rule.short {
  width: 28px;
}
.serif {
  font-family: "Liberation Mono", monospace;
  font-size: 11.500px;
  letter-spacing: -.5px;
}
.serif.off {
  color: #8d8d8d;
}

/* working area */
.work {
  height: 655px;
  flex: none;
  display: flex;
}
.rail {
  width: 25px;
  flex: none;
  padding-left: 1px;
  box-sizing: border-box;
}
.vbar {
  width: 20px;
  background: #ececec;
  border: 1px solid #7d7f85;
  box-sizing: border-box;
  display: flex;
  flex-direction: column;
  align-items: center;
  height: 354px;
}
.vbar.small {
  width: 22px;
  height: 80px;
}
.vgrip {
  width: 100%;
  height: 6px;
  flex: none;
  background: repeating-linear-gradient(90deg, #8c8c8c 0 1px, #c8c8c8 1px 2px) center / 100% 3px no-repeat #adb0b8;
}
.vslot {
  height: 18.400px;
  display: flex;
  align-items: center;
  justify-content: center;
  flex: none;
}
.center {
  width: 1548px;
  flex: none;
  display: flex;
  flex-direction: column;
}
.canvas-row {
  height: 634px;
  display: flex;
}
.canvas {
  display: block;
  background: #000;
  flex: none;
}
.dim {
  font-family: "Liberation Serif", serif;
  font-size: 18px;
  fill: #e4e4e4;
  stroke: none;
}
.label {
  font-family: "Noto Sans CJK SC", sans-serif;
  fill: #8b5a45;
  stroke: #8b5a45;
  stroke-width: .5px;
}
.brand {
  font-family: "Liberation Sans", "Noto Sans CJK SC", sans-serif;
  fill: #00cfcf;
  font-weight: 700;
  stroke: none;
}
.vscroll {
  width: 19px;
  flex: none;
  background: #f0f0f0;
  position: relative;
}
.vscroll .chev {
  right: 6px;
  top: auto;
  bottom: 8px;
  margin: 0;
}
.vscroll .chev.up {
  top: 9px;
  bottom: auto;
}
.vthumb {
  position: absolute;
  left: 0;
  top: 316px;
  width: 19px;
  height: 17px;
  background: #cfcfcf;
}
.tabs {
  height: 17px;
  display: flex;
  background: #efefef;
  align-items: stretch;
  font-size: 12px;
}
.nav {
  width: 63px;
  padding-left: 1px;
  box-sizing: border-box;
}
.tab {
  width: 50px;
  text-align: center;
  line-height: 17px;
  clip-path: polygon(0 0, 100% 0, 90% 100%, 8% 100%);
  background: #fbfbfb;
  color: #222;
  border-bottom: 1px solid #888;
  box-sizing: border-box;
}
.tab.active {
  width: 44px;
  background: #000;
  color: #eee;
  clip-path: polygon(0 0, 100% 0, 88% 100%, 12% 100%);
  border: 0;
}
.tabs-rest {
  width: 855px;
}
.hscroll {
  flex: 1;
  position: relative;
  border-left: 1px solid #bbb;
  display: flex;
  justify-content: space-between;
  padding: 0 25px 0 8px;
  line-height: 15px;
  font-size: 14px;
  color: #333;
}
.hthumb {
  position: absolute;
  left: 304px;
  top: 1px;
  width: 18px;
  height: 15px;
  background: #cfcfcf;
}
.rail-right {
  flex: 1;
  padding-left: 3px;
}

/* command line */
.command {
  height: 46px;
  flex: none;
  display: flex;
  background: #fff;
}
.cmd-grip {
  width: 13px;
  flex: none;
  background: #adb0b8;
}
.cmd-body {
  flex: 1;
  display: flex;
  flex-direction: column;
  font-family: "Liberation Mono", "Noto Sans CJK SC", monospace;
  font-size: 14px;
  color: #1c1c1c;
}
.cmd-line {
  white-space: pre;
  padding-left: 1px;
  box-sizing: border-box;
}
.log {
  height: 27px;
  line-height: 16px;
  border-bottom: 2px solid #c6c6c6;
}
.prompt {
  line-height: 20px;
  padding-top: 1px;
}
.cjk {
  letter-spacing: 2.400px;
}
.cjk.first {
  margin-left: 24px;
}
.cjk.last {
  letter-spacing: 2.750px;
}
.cmd-scroll {
  width: 14px;
  height: 27px;
  background: #f0f0f0;
  position: relative;
}
.cmd-scroll .chev {
  right: 5px;
  top: 19px;
  margin: 0;
}
.cmd-scroll .chev.up {
  top: 7px;
}

/* status bar */
.status {
  height: 19px;
  flex: none;
  display: flex;
  align-items: center;
  background: linear-gradient(#e4e4e4, #d8d8d8);
  border-top: 1px solid #777;
  box-sizing: border-box;
  font-family: "Liberation Mono", "Noto Sans CJK SC", monospace;
  font-size: 11.100px;
  color: #333;
}
.coords {
  width: 236px;
  padding-left: 10px;
  box-sizing: border-box;
  flex: none;
  white-space: pre;
}
.st-group {
  display: flex;
  height: 100%;
  background: #c8c8c8;
}
.st-btn {
  width: 18.300px;
  height: 100%;
  flex: none;
  display: flex;
  align-items: center;
  justify-content: center;
  box-sizing: border-box;
  border-right: 1px solid #9a9a9a;
}
.st-btn .ico {
  width: 14px;
  height: 14px;
}
.st-btn.on {
  background: #b2d7e4;
}
.st-right {
  margin-left: auto;
  display: flex;
  align-items: center;
  height: 100%;
}
.st-space {
  width: 18px;
  height: 100%;
  background: #e8e8e8;
}
.st-text {
  font-size: 11.500px;
  white-space: nowrap;
  padding-left: 2px;
}

/* overlays */
.watermark {
  position: absolute;
  left: 0;
  top: 0;
  pointer-events: none;
}
.wm {
  font-family: "Open Sans", "Noto Sans CJK SC", sans-serif;
  font-weight: 700;
  fill: rgba(165, 165, 165, .2);
}
.brand-big {
  font-family: "Noto Sans CJK SC", sans-serif;
  font-size: 60px;
  font-weight: 500;
  letter-spacing: 2px;
  fill: rgba(225, 225, 225, .88);
  stroke: rgba(120, 120, 120, .7);
  stroke-width: .7px;
}
.brand-id {
  font-family: "Open Sans", sans-serif;
  font-size: 31px;
  fill: rgba(255, 255, 255, .55);
  stroke: #8b8b8b;
  stroke-width: 1px;
}
.corner {
  position: absolute;
  right: 0;
  bottom: 0;
  width: 15px;
  height: 38px;
  background: #3c3c3c;
}
</style>
<style>
html, body {
  margin: 0;
  background: #adb0b8;
}
</style>
